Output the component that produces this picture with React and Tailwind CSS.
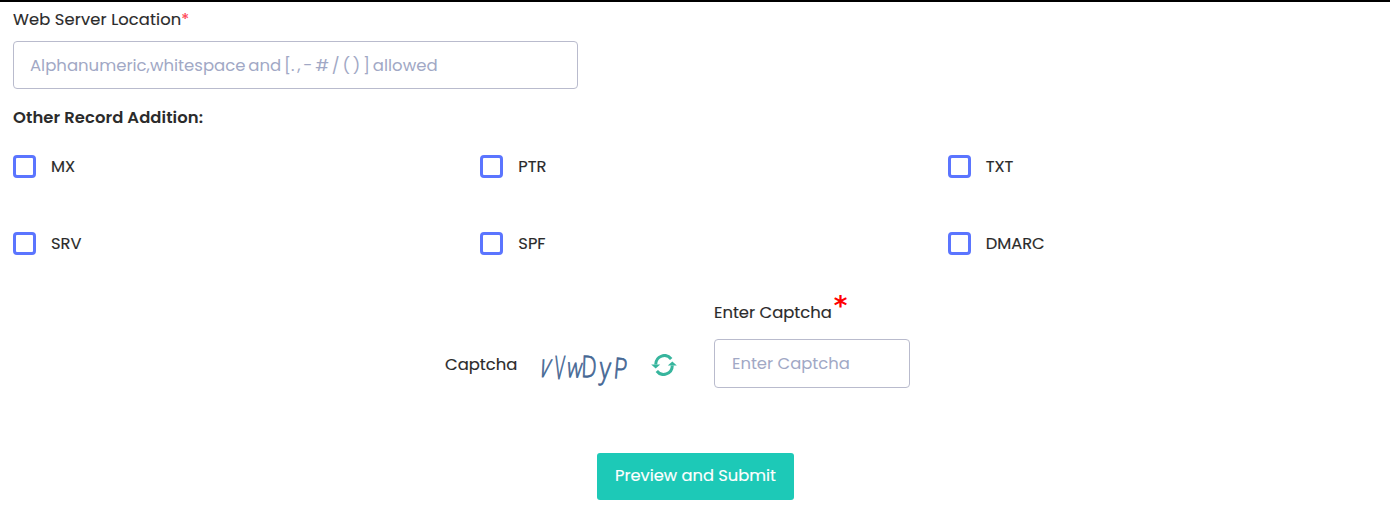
const records = ["MX", "PTR", "TXT", "SRV", "SPF", "DMARC"];

function RefreshIcon() {
  return (
    <svg className="h-[22px] w-[26px]" viewBox="0 0 26 22" fill="none" stroke="#37b59d" strokeWidth="3">
      <path d="M4.7 10.5 A8.7 9.1 0 0 1 20.2 5" />
      <path d="M21.3 11.5 A8.7 9.1 0 0 1 5.8 17" />
      <path d="M0.2 10.4 H9.2 L4.7 14.6 Z" fill="#37b59d" stroke="none" />
      <path d="M16.8 11.6 H25.8 L21.3 7.4 Z" fill="#37b59d" stroke="none" />
    </svg>
  );
}

function CaptchaImage() {
  return (
    <svg
      className="-ml-5 h-[76px] w-[120px] font-['Open_Sans',sans-serif] text-[24px] font-light"
      viewBox="-20 -20 120 76"
      fill="#456794"
      stroke="#456794"
      strokeWidth="0.7"
    >
      <text transform="translate(1 25) skewX(-16) scale(0.85 1.35)">v</text>
      <text transform="translate(17 27) skewX(-4) scale(0.7 1.35)">V</text>
      <text transform="translate(29 25) rotate(3) skewX(-5) scale(0.86 1.15)">w</text>
      <text transform="translate(44 25) rotate(2) scale(0.9 1.25)">D</text>
      <text transform="translate(62 26) rotate(4) scale(1 1.25)">y</text>
      <text transform="translate(76 26) rotate(5) scale(0.95 1.2)">P</text>
    </svg>
  );
}

export default function App() {
  return (
    <main className="h-[505px] overflow-hidden border-t-2 border-black bg-white font-['Poppins','Inter',sans-serif] text-base leading-6 text-[#2b2b2b]">
      <div className="px-[13px] pt-[6px]">
        <label className="block h-6 text-[16.3px] tracking-[0.13px] [-webkit-text-stroke:0.15px]">
          Web Server Location<span className="text-[#ff4050]">*</span>
        </label>
        <input
          className="mt-[9px] block h-[48px] w-[565px] rounded-[4px] border border-[#b9bbcd] px-4 text-[16.5px] [word-spacing:-1.6px] placeholder:text-[#a1a8c5]"
          placeholder="Alphanumeric,whitespace and [. , - # / ( ) ] allowed"
        />
        <h2 className="mt-[17px] h-6 text-[16.4px] font-semibold tracking-[0.08px]">Other Record Addition:</h2>
      </div>
      <div className="ml-[13px] mt-[24px] grid w-[1402px] grid-cols-3 gap-y-[53px]">
        {records.map((name) => (
          <label key={name} className="flex h-6 items-center">
            <span className="h-[23px] w-[23px] rounded-[4px] border-3 border-[#5b75ff]" />
            <span className="ml-[15px] mt-px text-[16.3px] [-webkit-text-stroke:0.15px]">{name}</span>
          </label>
        ))}
      </div>
      <div className="ml-[445px] mt-[37px] flex h-[96px]">
        <span className="mt-[61px] w-[92px] text-[16.4px] [-webkit-text-stroke:0.15px]">Captcha</span>
        <div className="mt-10"><CaptchaImage /></div>
        <div className="ml-[14px] mt-[62px]"><RefreshIcon /></div>
        <div className="ml-[37px]">
          <label className="flex h-[47px]">
            <span className="mt-[9px] text-[16.4px] [-webkit-text-stroke:0.15px]">Enter Captcha</span>
            <span className="ml-0.5 mt-0.5 font-['DejaVu_Sans'] text-[26px] font-bold leading-6 text-[#ff0000]">*</span>
          </label>
          <input
            className="block h-[49px] w-[196px] rounded-[4px] border border-[#b9bbcd] px-[17px] text-[16.4px] placeholder:text-[#a1a8c5]"
            placeholder="Enter Captcha"
          />
        </div>
      </div>
      <button className="ml-[597px] mt-[65px] block h-[47px] w-[197px] rounded-[3px] bg-[#1dc9b7] pb-[2px] text-[16.3px] text-white [-webkit-text-stroke:0.15px]">
        Preview and Submit
      </button>
    </main>
  );
}
